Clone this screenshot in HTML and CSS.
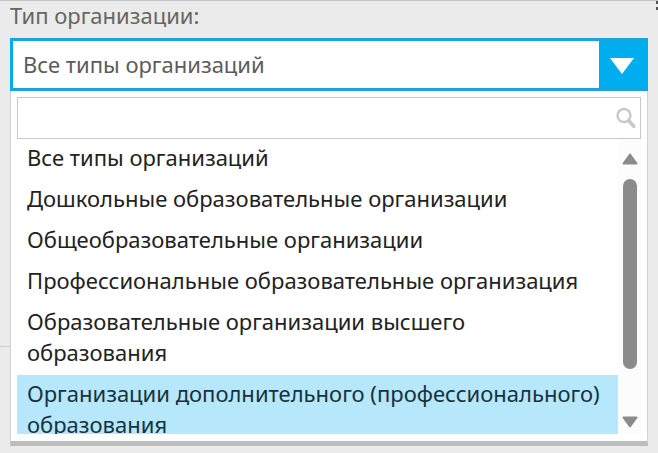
FILE: index.html
```html
<!DOCTYPE html>
<html lang="ru">
<head>
<meta charset="utf-8">
<title>Тип организации</title>
<link rel="stylesheet" href="styles.css">
</head>
<body>
<main class="field">
  <label class="label" for="org-type">Тип организации:</label>
  <div class="control">
    <select class="select" id="org-type">
      <option>Все типы организаций</option>
      <option>Дошкольные образовательные организации</option>
      <option>Общеобразовательные организации</option>
    </select>
    <span class="toggle" aria-hidden="true">
      <svg width="24" height="16" viewBox="0 0 24 16"><path d="M0 0H24L12 16Z" fill="#fff"/></svg>
    </span>
  </div>
  <div class="dropdown">
    <div class="search">
      <input class="search-input" type="text" aria-label="Поиск">
      <svg class="search-icon" width="20" height="22" viewBox="0 0 20 22" fill="none" stroke="#c9c9c9"><circle cx="8" cy="8.5" r="6.5" stroke-width="2.4"/><path d="M12.5 13.5L17.8 19.3" stroke-width="3.6" stroke-linecap="round"/></svg>
    </div>
    <div class="results">
      <ul class="list" role="listbox" aria-label="Тип организации">
        <li class="option" role="option">Все типы организаций</li>
        <li class="option" role="option">Дошкольные образовательные организации</li>
        <li class="option" role="option">Общеобразовательные организации</li>
        <li class="option" role="option">Профессиональные образовательные организация</li>
        <li class="option" role="option">Образовательные организации высшего образования</li>
        <li class="option active" role="option" aria-selected="true">Организации дополнительного (профессионального) образования</li>
      </ul>
      <div class="scrollbar" aria-hidden="true">
        <svg width="16" height="12" viewBox="0 0 16 12"><path d="M8 1.5L14.5 10.5H1.5Z" fill="#8b8b8b" stroke="#8b8b8b" stroke-width="2" stroke-linejoin="round"/></svg>
        <div class="track"><div class="thumb"></div></div>
        <svg width="16" height="12" viewBox="0 0 16 12"><path d="M1.5 1.5H14.5L8 10.5Z" fill="#8b8b8b" stroke="#8b8b8b" stroke-width="2" stroke-linejoin="round"/></svg>
      </div>
    </div>
  </div>
  <span class="divider"></span>
  <span class="edge-mark"></span>
</main>
</body>
</html>
```
FILE: styles.css
```css
* { box-sizing: border-box; }

body {
  margin: 0;
  background: #ebebeb;
  border-top: 1px solid #c4c4c4;
  font: 22px/28px "Noto Sans", "Open Sans", sans-serif;
  color: #222;
}

.field {
  position: relative;
  padding: 0 10px;
}

.label {
  display: block;
  height: 37px;
  color: #66665f;
}

.control {
  display: flex;
  height: 53px;
  border: 3px solid #00adef;
  border-top-color: #1ba4dc;
  border-bottom-color: #1ba4dc;
  background: #fff;
}

.select {
  flex: 1;
  min-width: 0;
  padding: 0 10px 2px;
  border: 0;
  outline: 0;
  appearance: none;
  background: #fff;
  color: #5c5c5c;
  font: inherit;
}

.toggle {
  display: flex;
  width: 46px;
  align-items: center;
  justify-content: center;
  padding-top: 2px;
  background: #00adef;
}

.dropdown {
  padding: 6px 6px 7px;
  border: 1px solid #d2d2d2;
  border-top: 0;
  border-bottom: 5px solid #bdbdbd;
  background: #fff;
}

.search {
  display: flex;
  height: 42px;
  align-items: center;
  padding-right: 4px;
  border: 1px solid #c9c9c9;
}

.search-input {
  flex: 1;
  min-width: 0;
  padding: 0 8px;
  border: 0;
  outline: 0;
  background: none;
  font: inherit;
}

.results {
  display: flex;
  height: 295px;
}

.list {
  flex: 1;
  margin: 0;
  padding: 0;
  overflow: hidden;
  list-style: none;
  line-height: 31px;
}

.option { padding: 3px 9px 7px 10px; }

.active {
  background: #b6e7fb;
  color: #16323e;
}

.scrollbar {
  display: flex;
  width: 23px;
  flex-direction: column;
  align-items: center;
  padding: 14px 0 6px;
  background: #fcfcfc;
}

.track {
  flex: 1;
  padding-top: 14px;
}

.thumb {
  width: 14px;
  height: 190px;
  border-radius: 7px;
  background: #8b8b8b;
}

.divider {
  position: absolute;
  top: 345px;
  left: 0;
  width: 10px;
  border-top: 1px dashed #c8c8c8;
}

.edge-mark {
  position: absolute;
  top: 0;
  right: 0;
  width: 2px;
  height: 9px;
  border: solid #555;
  border-width: 3px 0;
}
```
